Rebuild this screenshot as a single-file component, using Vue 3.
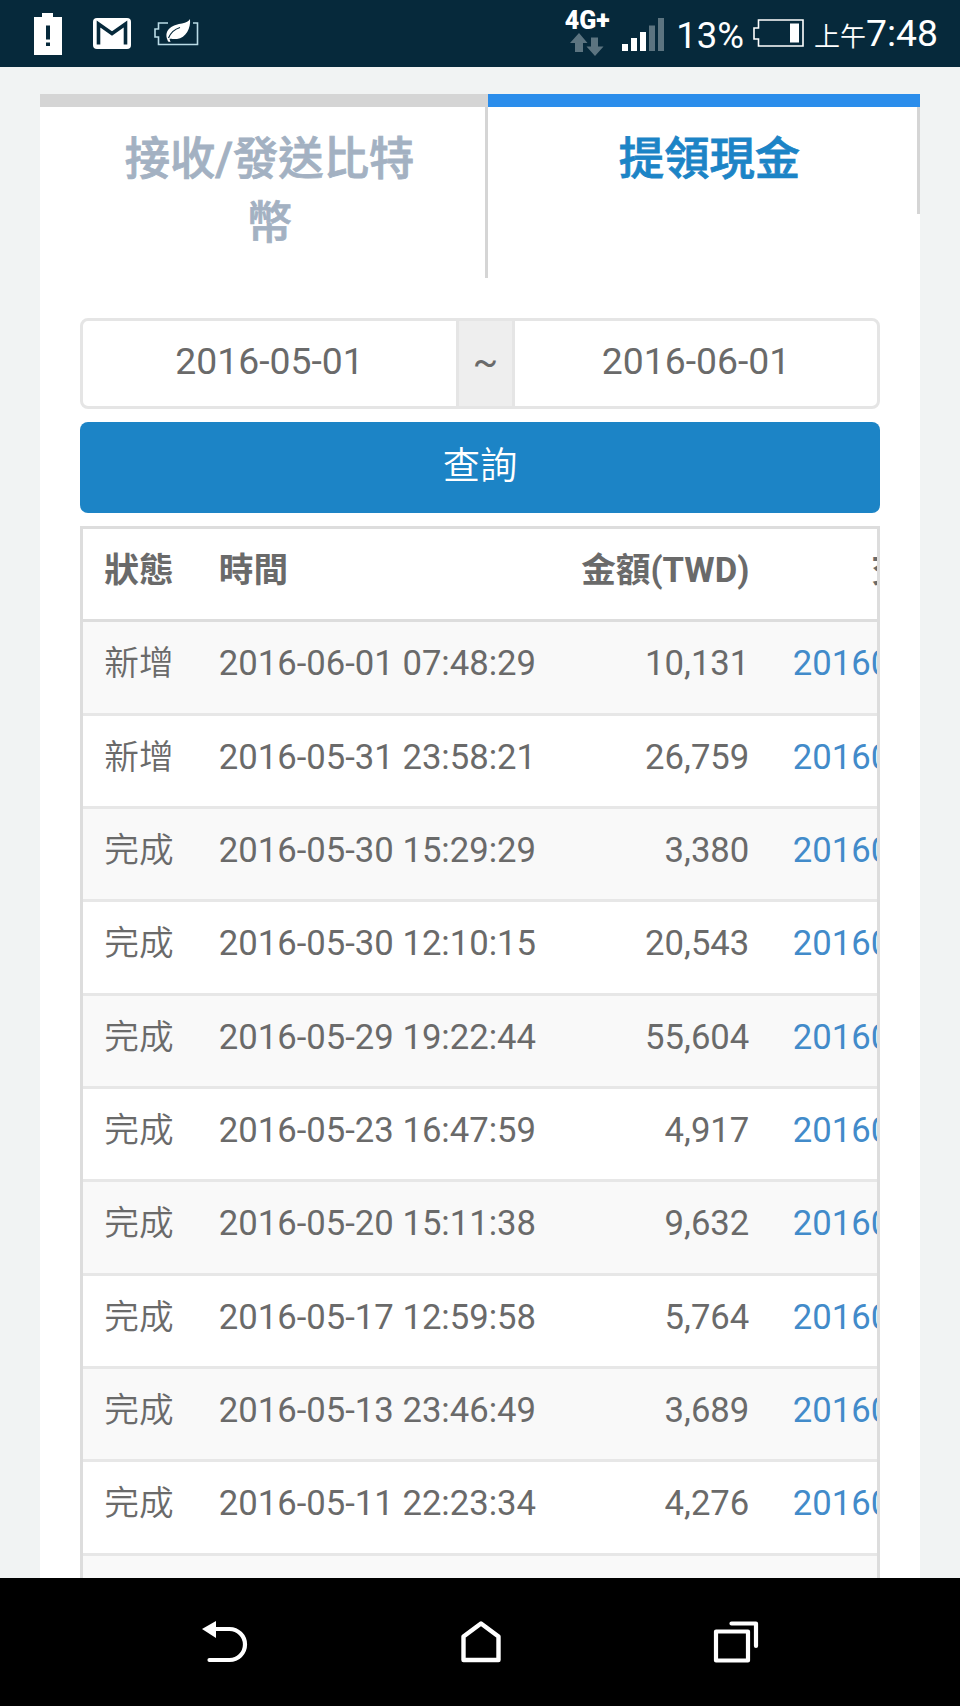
<script setup>
import { ref } from 'vue'

const tabs = [
  { id: 'transfer', label: '接收/發送比特幣' },
  { id: 'withdraw', label: '提領現金' },
]
const activeTab = ref('withdraw')

const startDate = ref('2016-05-01')
const endDate = ref('2016-06-01')

const columns = ['狀態', '時間', '金額(TWD)', '交易編號']

const records = [
  { status: '新增', time: '2016-06-01 07:48:29', amount: 10131, order: '20160601' },
  { status: '新增', time: '2016-05-31 23:58:21', amount: 26759, order: '20160531' },
  { status: '完成', time: '2016-05-30 15:29:29', amount: 3380, order: '20160530' },
  { status: '完成', time: '2016-05-30 12:10:15', amount: 20543, order: '20160530' },
  { status: '完成', time: '2016-05-29 19:22:44', amount: 55604, order: '20160529' },
  { status: '完成', time: '2016-05-23 16:47:59', amount: 4917, order: '20160523' },
  { status: '完成', time: '2016-05-20 15:11:38', amount: 9632, order: '20160520' },
  { status: '完成', time: '2016-05-17 12:59:58', amount: 5764, order: '20160517' },
  { status: '完成', time: '2016-05-13 23:46:49', amount: 3689, order: '20160513' },
  { status: '完成', time: '2016-05-11 22:23:34', amount: 4276, order: '20160511' },
]

function formatAmount(amount) {
  return amount.toLocaleString('en-US')
}
</script>

<template>
  <div class="screen">
    <header class="status-bar">
      <div class="notifications">
        <svg class="icon-alert" width="28" height="42" viewBox="0 0 28 42">
          <path d="M8 0h11v4h9v38H0V4h8z" fill="#fff" />
          <path d="M12 12.500h4v14h-4zM12 29.500h4v3.500h-4z" fill="#06293b" />
        </svg>
        <svg class="icon-mail" width="38" height="31" viewBox="0 0 38 31">
          <rect width="38" height="31" rx="4" fill="#fff" />
          <path d="M5.500 26.500V6L19 15.500L32.500 6v20.500" fill="none" stroke="#06293b" stroke-width="3.600" />
        </svg>
        <svg class="icon-saver" width="46" height="28" viewBox="0 0 46 28">
          <path d="M14 4H4.500v6H1v8h3.500v7.500H43.500V4H39" fill="none" stroke="#b9dbe6" stroke-width="1.600" />
          <path d="M13.500 21C9 10 20 5.500 28 4.500C32 4 35 2 36 0C37 9 32 19 23 20C19 20.500 16.500 19 15.500 20L16.500 23L14 22.500z" fill="#fff" />
          <path d="M14.500 19C17 13 21 10 26 8.500" fill="none" stroke="#06293b" stroke-width="1.200" />
        </svg>
      </div>
      <div class="system">
        <div class="network">
          <span>4G+</span>
          <svg width="34" height="24" viewBox="0 0 34 24">
            <path d="M9 0l8.500 10H13v9H5v-9H0z M21 4.500h7v9h5.500L25 23l-8.500-9.500H21z" fill="#5c7480" />
          </svg>
        </div>
        <svg class="icon-signal" width="42" height="33" viewBox="0 0 42 33">
          <path d="M0 26h6v7H0zM9 20h6v13H9zM18 14h6v19h-6z" fill="#fff" />
          <path d="M27 7.500h6V33h-6zM36 0h6v33h-6z" fill="#5c7480" />
        </svg>
        <span class="percent">13%</span>
        <svg class="icon-battery" width="51" height="28" viewBox="0 0 51 28">
          <path d="M5.500 1H50v26H5.500v-7H1V9h4.500z" fill="none" stroke="#fff" stroke-width="1.600" />
          <rect x="37" y="4.500" width="9" height="19" fill="#fff" />
        </svg>
        <span class="clock"><small>上午</small>7:48</span>
      </div>
    </header>

    <main class="card">
      <nav class="tabs">
        <a
          v-for="tab in tabs"
          :key="tab.id"
          class="tab"
          :class="{ active: tab.id === activeTab }"
          @click="activeTab = tab.id"
        >{{ tab.label }}</a>
      </nav>

      <section class="content">
        <div class="date-range">
          <span class="date">{{ startDate }}</span>
          <span class="addon">~</span>
          <span class="date">{{ endDate }}</span>
        </div>
        <button class="query">查詢</button>

        <div class="table-wrap">
          <div class="row head">
            <span v-for="column in columns" :key="column">{{ column }}</span>
          </div>
          <div v-for="record in records" :key="record.time" class="row">
            <span class="status">{{ record.status }}</span>
            <span>{{ record.time }}</span>
            <span>{{ formatAmount(record.amount) }}</span>
            <span><a>{{ record.order }}</a></span>
          </div>
          <div class="row"></div>
        </div>
      </section>
    </main>

    <footer class="nav-bar">
      <svg width="46" height="44" viewBox="0 0 46 44">
        <path d="M0 9L14 1v17z" fill="#fff" />
        <path d="M12 9H27.500a15.500 15.500 0 0 1 0 31H7.500" fill="none" stroke="#fff" stroke-width="4.200" stroke-linecap="round" />
      </svg>
      <svg width="40" height="44" viewBox="0 0 40 44">
        <path d="M2.500 16.500L20 3.500L37.500 16.500V40H2.500z" fill="none" stroke="#fff" stroke-width="4.400" stroke-linejoin="round" />
      </svg>
      <svg width="46" height="44" viewBox="0 0 46 44">
        <path d="M3 11.500h32v29H3z" fill="none" stroke="#fff" stroke-width="4.200" stroke-linejoin="round" />
        <path d="M18.500 3.500H43V26" fill="none" stroke="#fff" stroke-width="4.200" stroke-linecap="round" stroke-linejoin="round" />
      </svg>
    </footer>
  </div>
</template>

<style>
body {
  margin: 0;
  background: #f1f3f3;
}
</style>

<style scoped>
.screen {
  display: flex;
  flex-direction: column;
  width: 960px;
  height: 1706px;
  overflow: hidden;
  background: #f1f3f3;
  color: #6a6a6a;
  font-family: Roboto, "Noto Sans CJK TC", sans-serif;
}

/* status bar */
.status-bar {
  flex: none;
  display: flex;
  justify-content: space-between;
  height: 66.5px;
  background: #06293b;
  color: #fff;
}

.notifications,
.system {
  display: flex;
  align-items: flex-start;
}

.icon-alert {
  margin: 13px 0 0 34px;
}

.icon-mail {
  margin: 18px 0 0 31px;
}

.icon-saver {
  margin: 19px 0 0 23px;
}

.system {
  padding-right: 22px;
}

.network {
  display: flex;
  flex-direction: column;
  align-items: center;
  width: 48px;
  margin-top: 8px;
  font-size: 25px;
  font-weight: 900;
  line-height: 26px;
}

.network svg {
  margin-top: -1px;
}

.icon-signal {
  margin: 18px 0 0 11px;
}

.percent {
  margin: 14px 0 0 12px;
  font-size: 36.5px;
  line-height: 44px;
}

.icon-battery {
  margin: 19px 0 0 9px;
}

.clock {
  margin: 11px 0 0 10px;
  font-size: 37.33px;
  line-height: 44px;
}

.clock small {
  font-size: 26px;
  font-weight: 350;
}

/* card */
.card {
  flex: 1;
  min-height: 0;
  overflow: hidden;
  margin: 27.5px 40px 0;
  background: #fff;
}

.tabs {
  display: flex;
  align-items: flex-start;
}

.tab {
  box-sizing: border-box;
  width: 448px;
  padding: 21px 58px 22px 69px;
  border-top: 13px solid #d5d5d5;
  background: linear-gradient(#d5d5d5, #d5d5d5) right / 3px 100% no-repeat;
  color: #a3b1c2;
  font-size: 45.33px;
  font-weight: 500;
  line-height: 64px;
  text-align: center;
  -webkit-text-stroke: 0.8px;
}

.tab.active {
  width: 432px;
  border-top-color: #2b8deb;
  color: #1c84c6;
}

.content {
  padding: 40px 40px 0;
}

.date-range {
  box-sizing: border-box;
  display: flex;
  height: 91px;
  border: 3px solid #e5e5e5;
  border-radius: 8px;
  font-size: 37.33px;
  line-height: 81px;
  text-align: center;
}

.date {
  flex: 1 0 0;
}

.date:first-child {
  flex: none;
  width: 373px;
}

.addon {
  width: 59px;
  box-sizing: border-box;
  border: solid #e5e5e5;
  border-width: 0 3px;
  background: #eee;
  line-height: 80px;
}

.query {
  display: block;
  width: 100%;
  height: 91px;
  margin: 13px 0;
  padding: 0 0 9px;
  border: none;
  border-radius: 8px;
  background: #1c84c6;
  color: #fff;
  font-family: inherit;
  font-size: 37.33px;
  font-weight: 350;
}

/* records */
.table-wrap {
  overflow: hidden;
  border: 3px solid #ddd;
  border-bottom: none;
}

.row {
  box-sizing: border-box;
  display: grid;
  grid-template-columns: 114.5px 316px 214.5px 300px;
  height: 93.33px;
  padding: 21px 0 0 21.33px;
  border-bottom: 3px solid #e7e7e7;
  font-size: 34.67px;
  line-height: 40px;
  white-space: nowrap;
}

.row:nth-child(even) {
  background: #f9f9f9;
}

.row span:nth-child(3) {
  text-align: right;
}

.row span:nth-child(4) {
  padding-left: 43.5px;
}

.row a {
  color: #428bca;
}

.head {
  border-bottom-color: #ddd;
  font-weight: 700;
}

.row.head span:nth-child(4) {
  padding-left: 122px;
}

.status {
  font-weight: 350;
}

/* navigation bar */
.nav-bar {
  flex: none;
  display: flex;
  justify-content: space-between;
  align-items: flex-start;
  box-sizing: border-box;
  height: 128px;
  padding: 42px 201px 0 202px;
  background: #000;
}
</style>
